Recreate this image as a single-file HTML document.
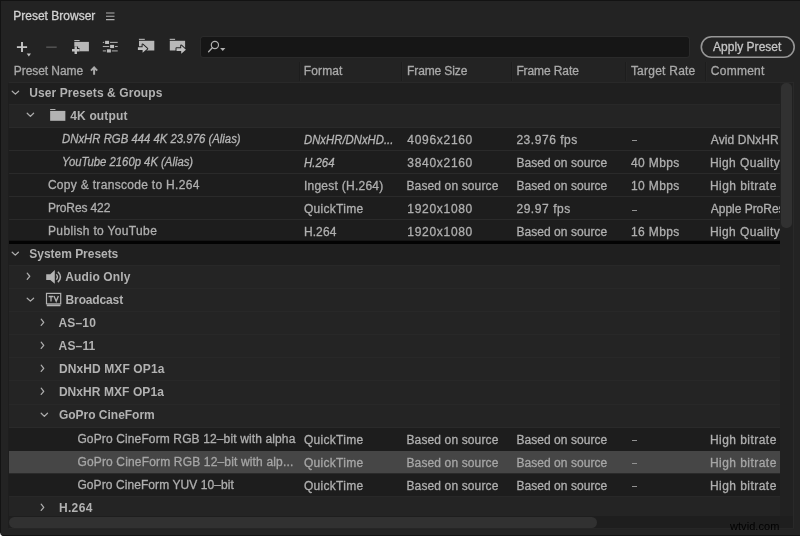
<!DOCTYPE html>
<html><head><meta charset="utf-8"><title>Preset Browser</title>
<style>
html,body{margin:0;padding:0;overflow:hidden}
html{width:800px;height:536px;background:#232323}
body{width:800px;height:536px;overflow:hidden;position:relative;background:#232323;font-family:"Liberation Sans",sans-serif;}
.t{position:absolute;white-space:pre;line-height:16px;height:16px;-webkit-text-stroke:0.3px currentColor}
.a{position:absolute;overflow:visible}
.b{position:absolute}
.r{position:absolute;left:8.5px;width:771.8px;box-sizing:border-box}
.r.dark{background:#1f1f1f;border-top:1px solid #292929}
.r.light{background:#242424;border-top:1px solid #282828}
.r.leaf{background:#1d1d1d;border-top:1px solid #2a2a2a}
.r.nb{border-top:0}
.r.sel{background:#464646}
</style></head><body>
<!-- frame -->
<div class="b" style="left:0;top:0;width:800px;height:1.4px;background:#131313"></div>
<div class="b" style="left:0;top:0;width:1.3px;height:536px;background:#131313"></div>
<div class="b" style="left:0;top:534.7px;width:800px;height:1.3px;background:#131313"></div>
<svg class="a" style="left:0;top:530px" width="6" height="6"><path d="M0 2.6Q0.3 5.5 2.6 6H0Z" fill="#fff"/></svg>
<!-- title -->
<svg class="a" style="left:105px;top:11px" width="11" height="10"><path d="M1 2h8.5M1 5.3h8.5M1 8.6h8.5" stroke="#b0b0b0" stroke-width="1.1"/></svg>
<!-- toolbar -->
<svg class="a" style="left:0;top:0" width="200" height="60"><path d="M16.9 47.1H27.1M22 42.1V52.1" stroke="#c6c6c6" stroke-width="1.9" fill="none"/><path d="M26.7 53.5h4.3l-2.15 2.9z" fill="#bdbdbd"/><path d="M46.2 47.2H56.7" stroke="#505050" stroke-width="1.6"/><rect x="74.3" y="40" width="5.3" height="1.1" fill="#b8b8b8"/><rect x="74.3" y="41.9" width="14.6" height="9.4" fill="#b8b8b8"/><path d="M72 50.3h7.5M75.75 46.6v7.4" stroke="#232323" stroke-width="4.6" fill="none"/><path d="M72 50.3h7.5M75.75 46.6v7.4" stroke="#c0c0c0" stroke-width="2.4" fill="none"/><path d="M102.8 42.4H117.7" stroke="#a8a8a8" stroke-width="1.1"/><rect x="104.19999999999999" y="40.199999999999996" width="5.8" height="4.4" fill="#232323"/><rect x="105.1" y="40.8" width="4" height="3.2" fill="#bcbcbc"/><path d="M102.8 46.5H117.7" stroke="#a8a8a8" stroke-width="1.1"/><rect x="109.19999999999999" y="44.3" width="5.8" height="4.4" fill="#232323"/><rect x="110.1" y="44.9" width="4" height="3.2" fill="#bcbcbc"/><path d="M102.8 50.9H117.7" stroke="#a8a8a8" stroke-width="1.1"/><rect x="106.0" y="48.699999999999996" width="5.8" height="4.4" fill="#232323"/><rect x="106.9" y="49.3" width="4" height="3.2" fill="#bcbcbc"/><rect x="138.9" y="38.8" width="5.9" height="1.1" fill="#b8b8b8"/><rect x="139" y="40.8" width="15.3" height="9.7" fill="#b8b8b8"/><path d="M137.9 47.2H142.6V44.6L147.3 48.65L142.6 52.7V50.1H137.9Z" fill="#232323" stroke="#232323" stroke-width="2" stroke-linejoin="round"/><path d="M137.9 47.2H142.6V44.6L147.3 48.65L142.6 52.7V50.1H137.9Z" fill="#c0c0c0"/><rect x="169.7" y="38.8" width="5.4" height="1.1" fill="#b8b8b8"/><rect x="169.8" y="40.8" width="15.3" height="9.7" fill="#b8b8b8"/><path d="M176.5 48.2H181.2V45.6L185.9 49.65L181.2 53.7V51.1H176.5Z" fill="#232323" stroke="#232323" stroke-width="2" stroke-linejoin="round"/><path d="M176.5 48.2H181.2V45.6L185.9 49.65L181.2 53.7V51.1H176.5Z" fill="#c0c0c0"/></svg>
<!-- search -->
<div class="b" style="left:200.5px;top:36.7px;width:488.5px;height:20px;background:#161616;border-radius:2.5px;box-shadow:0 0 0 1px #2a2a2a"></div>
<svg class="a" style="left:206px;top:39px" width="22" height="16"><circle cx="8.9" cy="6" r="3.6" fill="none" stroke="#b0b0b0" stroke-width="1.2"/><path d="M6.3 8.7L2.6 12.7" stroke="#b0b0b0" stroke-width="1.3" stroke-linecap="round"/><path d="M14.1 9.1h5.3l-2.65 2.9z" fill="#b0b0b0"/></svg>
<!-- apply -->
<svg class="a" style="left:698px;top:34px" width="100" height="26"><rect x="3.3" y="2.8" width="92.9" height="20.4" rx="10.2" fill="none" stroke="#969696" stroke-width="1.6"/></svg>
<!-- header seps -->
<div class="b" style="left:299.0px;top:62px;width:1px;height:19px;background:#1d1d1d;box-shadow:1px 0 0 #262626"></div>
<div class="b" style="left:400.5px;top:62px;width:1px;height:19px;background:#1d1d1d;box-shadow:1px 0 0 #262626"></div>
<div class="b" style="left:510.5px;top:62px;width:1px;height:19px;background:#1d1d1d;box-shadow:1px 0 0 #262626"></div>
<div class="b" style="left:624.5px;top:62px;width:1px;height:19px;background:#1d1d1d;box-shadow:1px 0 0 #262626"></div>
<div class="b" style="left:704.5px;top:62px;width:1px;height:19px;background:#1d1d1d;box-shadow:1px 0 0 #262626"></div>
<svg class="a" style="left:90px;top:66px" width="9" height="10"><path d="M4.1 8.7V2M1 4.6L4.1 1.4L7.2 4.6" fill="none" stroke="#a9a9a9" stroke-width="2"/></svg>
<!-- list -->
<div class="b" style="left:8px;top:82px;width:785.5px;height:446.8px;box-sizing:border-box;border:1px solid #292929;border-left-color:#1e1e1e;border-bottom-color:#262626;background:#212121"></div>
<div class="r dark nb" style="top:83px;height:21px"></div><div class="r light" style="top:104px;height:23px"></div><div class="r leaf" style="top:127px;height:23px"></div><div class="r leaf" style="top:150px;height:23px"></div><div class="r leaf" style="top:173px;height:23px"></div><div class="r leaf" style="top:196px;height:23px"></div><div class="r leaf" style="top:219px;height:22px"></div><div class="r dark nb" style="top:244px;height:21px"></div><div class="r light" style="top:265px;height:23px"></div><div class="r light" style="top:288px;height:23px"></div><div class="r light" style="top:311px;height:23px"></div><div class="r light" style="top:334px;height:23px"></div><div class="r light" style="top:357px;height:23px"></div><div class="r light" style="top:380px;height:24px"></div><div class="r light" style="top:404px;height:23px"></div><div class="r leaf" style="top:427px;height:24px"></div><div class="r sel" style="top:451px;height:22px"></div><div class="r leaf" style="top:473px;height:23px"></div><div class="r light" style="top:496px;height:20px"></div>
<div class="b" style="left:8.5px;top:241px;width:771.8px;height:3px;background:#030303"></div>
<div class="b" style="left:8.5px;top:240px;width:771.8px;height:1px;background:#151515"></div>
<!-- scrollbars -->
<div class="b" style="left:781.2px;top:83.4px;width:10.9px;height:144.4px;border-radius:5px;background:#313131"></div>
<div class="b" style="left:9px;top:516px;width:783.5px;height:12px;background:#1e1e1e"></div>
<div class="b" style="left:9px;top:517.2px;width:587.5px;height:10.8px;border-radius:5.4px;background:#313131"></div>
<svg class="a" style="left:11.15px;top:89.55px" width="8.799999999999999" height="5.549999999999997"><path d="M1.2 1.2 L4.3999999999999995 4.149999999999997 L7.599999999999999 1.2" fill="none" stroke="#adadad" stroke-width="1.25" stroke-linecap="round" stroke-linejoin="round"/></svg><svg class="a" style="left:25.65px;top:111.8px" width="8.800000000000004" height="5.799999999999997"><path d="M1.2 1.2 L4.400000000000002 4.399999999999997 L7.600000000000004 1.2" fill="none" stroke="#adadad" stroke-width="1.25" stroke-linecap="round" stroke-linejoin="round"/></svg><svg class="a" style="left:11.4px;top:251.05px" width="8.549999999999999" height="5.549999999999983"><path d="M1.2 1.2 L4.2749999999999995 4.149999999999983 L7.349999999999999 1.2" fill="none" stroke="#adadad" stroke-width="1.25" stroke-linecap="round" stroke-linejoin="round"/></svg><svg class="a" style="left:25.75px;top:272.2px" width="5.149999999999999" height="8.5"><path d="M1.2 1.2 L3.7499999999999987 4.25 L1.2 7.3" fill="none" stroke="#adadad" stroke-width="1.25" stroke-linecap="round" stroke-linejoin="round"/></svg><svg class="a" style="left:25.65px;top:297.3px" width="8.800000000000004" height="5.550000000000011"><path d="M1.2 1.2 L4.400000000000002 4.150000000000011 L7.600000000000004 1.2" fill="none" stroke="#adadad" stroke-width="1.25" stroke-linecap="round" stroke-linejoin="round"/></svg><svg class="a" style="left:40.25px;top:318.4px" width="5.149999999999999" height="8.600000000000023"><path d="M1.2 1.2 L3.7499999999999987 4.300000000000011 L1.2 7.400000000000023" fill="none" stroke="#adadad" stroke-width="1.25" stroke-linecap="round" stroke-linejoin="round"/></svg><svg class="a" style="left:40.25px;top:341.4px" width="5.149999999999999" height="8.600000000000023"><path d="M1.2 1.2 L3.7499999999999987 4.300000000000011 L1.2 7.400000000000023" fill="none" stroke="#adadad" stroke-width="1.25" stroke-linecap="round" stroke-linejoin="round"/></svg><svg class="a" style="left:40.25px;top:364.4px" width="5.149999999999999" height="8.600000000000023"><path d="M1.2 1.2 L3.7499999999999987 4.300000000000011 L1.2 7.400000000000023" fill="none" stroke="#adadad" stroke-width="1.25" stroke-linecap="round" stroke-linejoin="round"/></svg><svg class="a" style="left:40.25px;top:387.4px" width="5.149999999999999" height="8.600000000000023"><path d="M1.2 1.2 L3.7499999999999987 4.300000000000011 L1.2 7.400000000000023" fill="none" stroke="#adadad" stroke-width="1.25" stroke-linecap="round" stroke-linejoin="round"/></svg><svg class="a" style="left:40.1px;top:412.0px" width="8.700000000000003" height="5.800000000000011"><path d="M1.2 1.2 L4.350000000000001 4.400000000000011 L7.500000000000003 1.2" fill="none" stroke="#adadad" stroke-width="1.25" stroke-linecap="round" stroke-linejoin="round"/></svg><svg class="a" style="left:40.25px;top:502.9px" width="5.149999999999999" height="8.600000000000023"><path d="M1.2 1.2 L3.7499999999999987 4.300000000000011 L1.2 7.400000000000023" fill="none" stroke="#adadad" stroke-width="1.25" stroke-linecap="round" stroke-linejoin="round"/></svg>
<svg class="a" style="left:0;top:0" width="80" height="320"><rect x="50.15" y="109" width="5.3" height="1" fill="#b3b3b3"/><rect x="50.15" y="110.9" width="15.2" height="9.9" fill="#b3b3b3"/><path d="M46.2 274.2H50.3L54.8 270.1V283.7L50.3 280H46.2Z" fill="#b3b3b3"/><path d="M56.3 274.4Q58.6 277 56.3 279.6" fill="none" stroke="#b3b3b3" stroke-width="1.4"/><path d="M57.9 271.8Q63 277 57.9 282.2" fill="none" stroke="#b3b3b3" stroke-width="1.5"/><rect x="46.5" y="293.4" width="14.2" height="10.5" fill="none" stroke="#b3b3b3" stroke-width="1.2"/><rect x="46.7" y="304.6" width="13.8" height="1.7" rx="0.6" fill="#b3b3b3"/><path d="M48.6 296.5H53.4M51 296.5V301.6" fill="none" stroke="#b3b3b3" stroke-width="1.3"/><path d="M54 296 L56.2 301.3 L58.4 296" fill="none" stroke="#b3b3b3" stroke-width="1.3" stroke-linejoin="miter"/></svg>
<div class="b" style="left:0;top:0;width:800px;height:536px;will-change:transform">
<div class="t" style="left:13.21px;top:7.80px;font-size:12px;letter-spacing:0.008px;color:#d2d2d2;">Preset Browser</div><div class="t" style="left:13.78px;top:63.40px;font-size:12px;letter-spacing:-0.070px;color:#a9a9a9;">Preset Name</div><div class="t" style="left:303.78px;top:63.40px;font-size:12px;letter-spacing:0.121px;color:#a9a9a9;">Format</div><div class="t" style="left:407.05px;top:63.40px;font-size:12px;letter-spacing:-0.118px;color:#a9a9a9;">Frame Size</div><div class="t" style="left:516.40px;top:63.40px;font-size:12px;letter-spacing:-0.104px;color:#a9a9a9;">Frame Rate</div><div class="t" style="left:630.88px;top:63.40px;font-size:12px;letter-spacing:0.238px;color:#a9a9a9;">Target Rate</div><div class="t" style="left:710.82px;top:63.40px;font-size:12px;letter-spacing:0.260px;color:#a9a9a9;">Comment</div><div class="t" style="left:713.10px;top:39.20px;font-size:12px;letter-spacing:0.023px;color:#c4c4c4;">Apply Preset</div><div class="t" style="left:29.35px;top:84.50px;font-size:12px;letter-spacing:0.080px;color:#b2b2b2;font-weight:700;-webkit-text-stroke:0;">User Presets &amp; Groups</div><div class="t" style="left:70.30px;top:107.50px;font-size:12px;letter-spacing:0.138px;color:#b2b2b2;font-weight:700;-webkit-text-stroke:0;">4K output</div><div class="t" style="left:61.90px;top:130.50px;font-size:12px;transform:scaleX(0.9462);transform-origin:0 0;color:#b6b6b6;font-style:italic;-webkit-text-stroke:0.28px currentColor;">DNxHR RGB 444 4K 23.976 (Alias)</div><div class="t" style="left:303.65px;top:131.50px;font-size:12px;transform:scaleX(0.9438);transform-origin:0 0;color:#b6b6b6;font-style:italic;-webkit-text-stroke:0.28px currentColor;">DNxHR/DNxHD...</div><div class="t" style="left:407.35px;top:131.50px;font-size:12px;letter-spacing:0.695px;color:#afafaf;">4096x2160</div><div class="t" style="left:516.40px;top:131.50px;font-size:12px;letter-spacing:0.545px;color:#afafaf;">23.976 fps</div><div class="b" style="left:631.7px;top:140px;width:5.5px;height:1.4px;background:#929292"></div><div class="t" style="left:710.82px;top:131.50px;font-size:12px;letter-spacing:0.087px;color:#afafaf;">Avid DNxHR</div><div class="t" style="left:61.90px;top:154.00px;font-size:12px;transform:scaleX(0.9418);transform-origin:0 0;color:#b6b6b6;font-style:italic;-webkit-text-stroke:0.28px currentColor;">YouTube 2160p 4K (Alias)</div><div class="t" style="left:303.65px;top:155.00px;font-size:12px;transform:scaleX(0.9553);transform-origin:0 0;color:#b6b6b6;font-style:italic;-webkit-text-stroke:0.28px currentColor;">H.264</div><div class="t" style="left:407.35px;top:155.00px;font-size:12px;letter-spacing:0.695px;color:#afafaf;">3840x2160</div><div class="t" style="left:516.40px;top:155.00px;font-size:12px;letter-spacing:0.060px;color:#afafaf;">Based on source</div><div class="t" style="left:630.88px;top:155.00px;font-size:12px;letter-spacing:0.399px;color:#afafaf;">40 Mbps</div><div class="t" style="left:709.92px;top:155.00px;font-size:12px;letter-spacing:0.398px;color:#afafaf;width:70.38px;overflow:hidden;">High Quality</div><div class="t" style="left:47.88px;top:177.00px;font-size:12px;letter-spacing:0.308px;color:#afafaf;">Copy &amp; transcode to H.264</div><div class="t" style="left:303.88px;top:178.00px;font-size:12px;letter-spacing:0.260px;color:#afafaf;">Ingest (H.264)</div><div class="t" style="left:406.45px;top:178.00px;font-size:12px;letter-spacing:0.131px;color:#afafaf;">Based on source</div><div class="t" style="left:516.40px;top:178.00px;font-size:12px;letter-spacing:0.060px;color:#afafaf;">Based on source</div><div class="t" style="left:630.88px;top:178.00px;font-size:12px;letter-spacing:0.399px;color:#afafaf;">10 Mbps</div><div class="t" style="left:709.92px;top:178.00px;font-size:12px;letter-spacing:0.459px;color:#afafaf;">High bitrate</div><div class="t" style="left:48.02px;top:200.00px;font-size:12px;letter-spacing:-0.116px;color:#afafaf;">ProRes 422</div><div class="t" style="left:303.88px;top:201.00px;font-size:12px;letter-spacing:0.315px;color:#afafaf;">QuickTime</div><div class="t" style="left:407.35px;top:201.00px;font-size:12px;letter-spacing:0.695px;color:#afafaf;">1920x1080</div><div class="t" style="left:516.40px;top:201.00px;font-size:12px;letter-spacing:0.566px;color:#afafaf;">29.97 fps</div><div class="b" style="left:631.7px;top:210px;width:5.5px;height:1.4px;background:#929292"></div><div class="t" style="left:710.82px;top:201.00px;font-size:12px;letter-spacing:-0.027px;color:#afafaf;width:69.48px;overflow:hidden;">Apple ProRes</div><div class="t" style="left:48.02px;top:223.00px;font-size:12px;letter-spacing:0.342px;color:#afafaf;">Publish to YouTube</div><div class="t" style="left:303.88px;top:224.00px;font-size:12px;letter-spacing:0.123px;color:#afafaf;">H.264</div><div class="t" style="left:407.35px;top:224.00px;font-size:12px;letter-spacing:0.695px;color:#afafaf;">1920x1080</div><div class="t" style="left:516.40px;top:224.00px;font-size:12px;letter-spacing:0.060px;color:#afafaf;">Based on source</div><div class="t" style="left:630.88px;top:224.00px;font-size:12px;letter-spacing:0.399px;color:#afafaf;">16 Mbps</div><div class="t" style="left:709.92px;top:224.00px;font-size:12px;letter-spacing:0.398px;color:#afafaf;width:70.38px;overflow:hidden;">High Quality</div><div class="t" style="left:29.35px;top:246.00px;font-size:12px;letter-spacing:-0.034px;color:#b2b2b2;font-weight:700;-webkit-text-stroke:0;">System Presets</div><div class="t" style="left:65.35px;top:269.00px;font-size:12px;letter-spacing:0.111px;color:#b2b2b2;font-weight:700;-webkit-text-stroke:0;">Audio Only</div><div class="t" style="left:65.59px;top:292.25px;font-size:12px;letter-spacing:-0.140px;color:#b2b2b2;font-weight:700;-webkit-text-stroke:0;">Broadcast</div><div class="t" style="left:58.54px;top:315.00px;font-size:12px;letter-spacing:0.145px;color:#b2b2b2;font-weight:700;-webkit-text-stroke:0;">AS–10</div><div class="t" style="left:58.54px;top:338.00px;font-size:12px;letter-spacing:0.182px;color:#b2b2b2;font-weight:700;-webkit-text-stroke:0;">AS–11</div><div class="t" style="left:58.88px;top:361.00px;font-size:12px;letter-spacing:0.111px;color:#b2b2b2;font-weight:700;-webkit-text-stroke:0;">DNxHD MXF OP1a</div><div class="t" style="left:58.88px;top:384.00px;font-size:12px;letter-spacing:0.071px;color:#b2b2b2;font-weight:700;-webkit-text-stroke:0;">DNxHR MXF OP1a</div><div class="t" style="left:58.88px;top:407.00px;font-size:12px;letter-spacing:-0.009px;color:#b2b2b2;font-weight:700;-webkit-text-stroke:0;">GoPro CineForm</div><div class="t" style="left:77.40px;top:430.50px;font-size:12px;letter-spacing:0.129px;color:#afafaf;">GoPro CineForm RGB 12–bit with alpha</div><div class="t" style="left:303.88px;top:431.50px;font-size:12px;letter-spacing:0.315px;color:#afafaf;">QuickTime</div><div class="t" style="left:406.45px;top:431.50px;font-size:12px;letter-spacing:0.131px;color:#afafaf;">Based on source</div><div class="t" style="left:516.40px;top:431.50px;font-size:12px;letter-spacing:0.060px;color:#afafaf;">Based on source</div><div class="b" style="left:631.7px;top:440px;width:5.5px;height:1.4px;background:#929292"></div><div class="t" style="left:709.92px;top:431.50px;font-size:12px;letter-spacing:0.459px;color:#afafaf;">High bitrate</div><div class="t" style="left:77.40px;top:453.50px;font-size:12px;letter-spacing:0.160px;color:#a6a6a6;">GoPro CineForm RGB 12–bit with alp...</div><div class="t" style="left:303.88px;top:454.50px;font-size:12px;letter-spacing:0.315px;color:#a6a6a6;">QuickTime</div><div class="t" style="left:406.45px;top:454.50px;font-size:12px;letter-spacing:0.131px;color:#a6a6a6;">Based on source</div><div class="t" style="left:516.40px;top:454.50px;font-size:12px;letter-spacing:0.060px;color:#a6a6a6;">Based on source</div><div class="b" style="left:631.7px;top:463px;width:5.5px;height:1.4px;background:#929292"></div><div class="t" style="left:709.92px;top:454.50px;font-size:12px;letter-spacing:0.459px;color:#a6a6a6;">High bitrate</div><div class="t" style="left:77.40px;top:476.50px;font-size:12px;letter-spacing:0.082px;color:#afafaf;">GoPro CineForm YUV 10–bit</div><div class="t" style="left:303.88px;top:477.50px;font-size:12px;letter-spacing:0.315px;color:#afafaf;">QuickTime</div><div class="t" style="left:406.45px;top:477.50px;font-size:12px;letter-spacing:0.131px;color:#afafaf;">Based on source</div><div class="t" style="left:516.40px;top:477.50px;font-size:12px;letter-spacing:0.060px;color:#afafaf;">Based on source</div><div class="b" style="left:631.7px;top:486px;width:5.5px;height:1.4px;background:#929292"></div><div class="t" style="left:709.92px;top:477.50px;font-size:12px;letter-spacing:0.459px;color:#afafaf;">High bitrate</div><div class="t" style="left:58.88px;top:499.50px;font-size:12px;letter-spacing:0.373px;color:#b2b2b2;font-weight:700;-webkit-text-stroke:0;">H.264</div>
</div>
<div class="t" style="will-change:transform;-webkit-text-stroke:0;left:729.5px;top:517.6px;font-size:11px;color:#020202;letter-spacing:0.05px">wtvid.com</div>
</body></html>
